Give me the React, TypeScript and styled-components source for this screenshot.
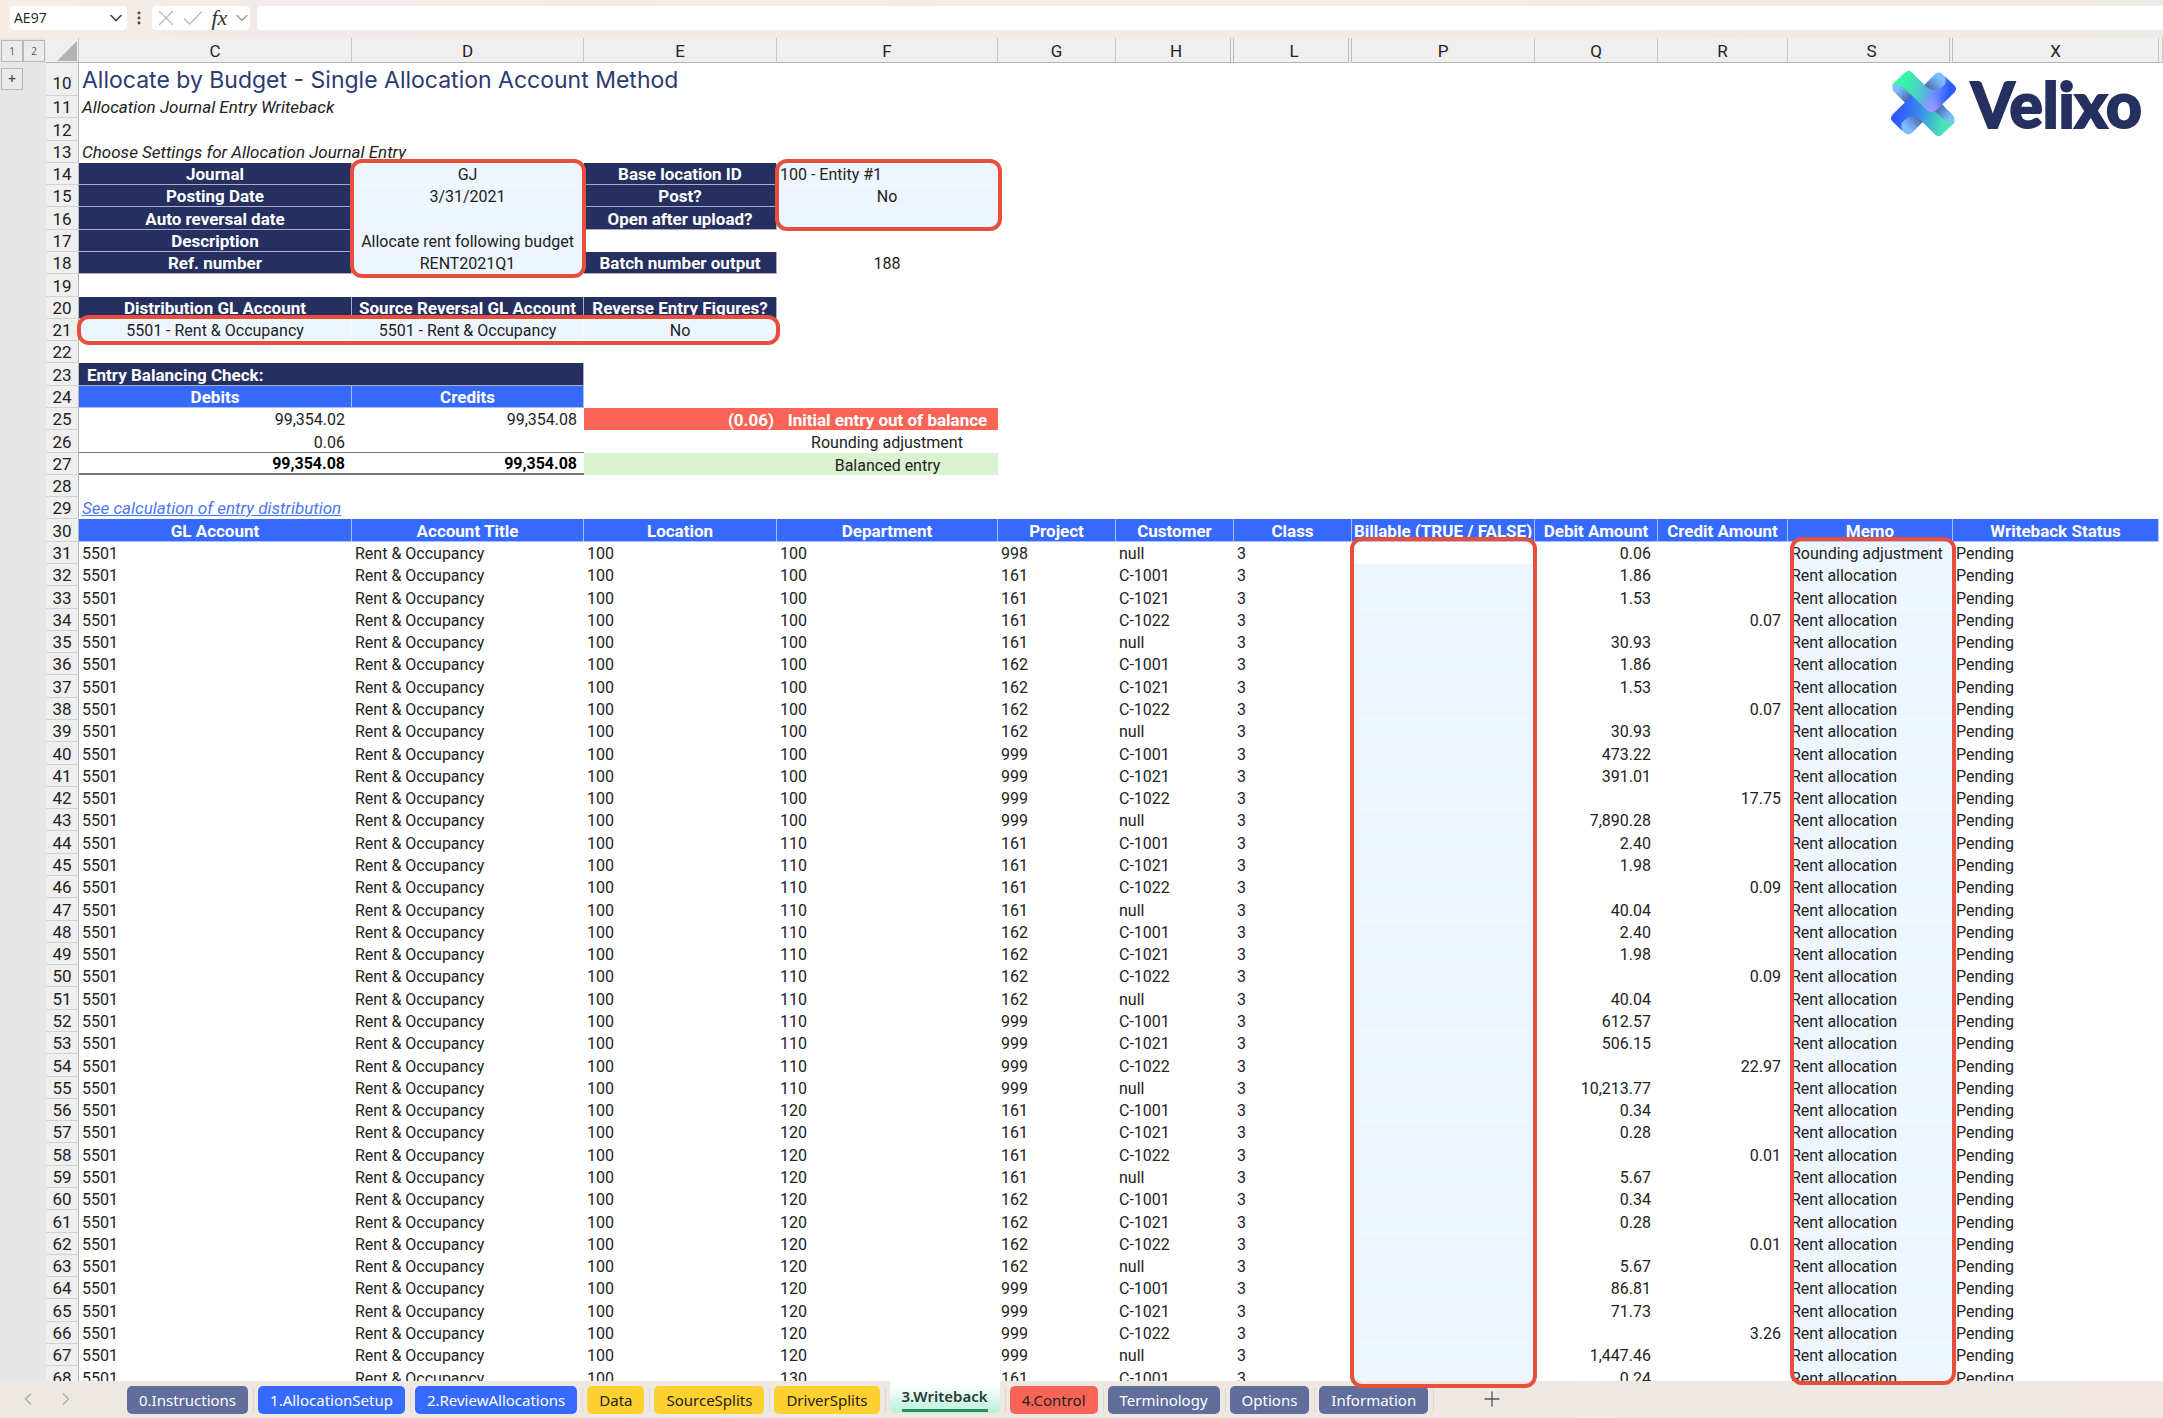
import React from "react";
import styled, { createGlobalStyle, css } from "styled-components";

const NAVY = "#253061";
const BLUE = "#366aff";
const INPUT = "#edf5fe";
const RED = "#f96456";
const GREEN = "#dbf2d0";
const RING = "#e74f3c";

const GlobalStyle = createGlobalStyle`
  * { box-sizing: border-box; }
  body { margin: 0; background: #fff; }
  button, input { font: inherit; color: inherit; }
`;

const Workbook = styled.div`
  height: 100vh;
  display: flex;
  flex-direction: column;
  overflow: hidden;
  color: #222;
  font-family: Roboto, "Liberation Sans", sans-serif;
  font-size: 16px;
`;

/* ---------- formula bar ---------- */

const FormulaBar = styled.header`
  flex: none;
  height: 38px;
  display: flex;
  align-items: center;
  padding: 0 0 3px 10px;
  background: linear-gradient(90deg, #f6ede3, #f1eae6 12%, #f3ebe3 50%, #f3e9e2 90%, #eee9e4);
  font-family: "Open Sans", "Noto Sans", sans-serif;
  font-size: 14px;
`;

const NameBox = styled.label`
  width: 117px;
  height: 24px;
  display: flex;
  align-items: center;
  justify-content: space-between;
  padding: 0 5px 0 4px;
  background: #fff;
  border-radius: 4px;
`;

const NameInput = styled.input`
  width: 80px;
  padding: 0;
  border: 0;
  outline: 0;
  background: none;
`;

const Dots = styled.svg`
  width: 4px;
  height: 14px;
  margin: 0 11px 0 10px;
`;

const FormulaTools = styled.div`
  width: 98px;
  height: 24px;
  margin-right: 7px;
  padding: 0 2px 0 6px;
  display: flex;
  align-items: center;
  justify-content: space-between;
  background: #fff;
  border-radius: 4px;
`;

const ToolButton = styled.button`
  display: flex;
  padding: 0;
  border: 0;
  background: none;
`;

const FxLabel = styled.span`
  font: italic 22px/22px "Liberation Serif", serif;
  color: #333;
`;

const FormulaInput = styled.input`
  flex: 1;
  min-width: 0;
  height: 24px;
  padding: 0 8px;
  border: 0;
  outline: 0;
  border-radius: 4px 0 0 4px;
  background: #fff;
`;

/* ---------- sheet ---------- */

const Sheet = styled.main`
  position: relative;
  flex: 1;
  min-height: 0;
`;

const Viewport = styled.div`
  height: 100%;
  display: flex;
  overflow: hidden;
`;

const Gutter = styled.aside`
  flex: none;
  width: 46px;
  padding: 2px 1px;
  display: flex;
  flex-direction: column;
  gap: 6px;
  background: #e6e6e6;
`;

const Levels = styled.div`
  display: flex;
`;

const OutlineButton = styled.button<{ $sign?: boolean }>`
  width: 22px;
  height: 22px;
  padding: 0;
  border: 1px solid #b3b8bf;
  background: #ebebeb;
  font: 10px/20px "Open Sans", sans-serif;
  color: #555;
  ${(p) => p.$sign && css`font-size: 14px; font-weight: 600; color: #444;`}
`;

const Grid = styled.table`
  flex: 1;
  width: 0;
  align-self: flex-start;
  table-layout: fixed;
  border-collapse: separate;
  border-spacing: 0;
  line-height: 19px;
  white-space: nowrap;
`;

const Column = styled.col<{ $w?: number }>`
  ${(p) => p.$w && css`width: ${p.$w}px;`}
`;

const HeadRow = styled.tr`
  height: 25px;
`;

const ColumnHead = styled.th<{ $folded?: boolean }>`
  padding: 2px 0 0 ${(p) => (p.$folded ? 6 : 0)}px;
  background: #efefef;
  border-right: ${(p) => (p.$folded ? "4px double #bdbdbd" : "1px solid #c6c6c6")};
  border-bottom: 1px solid #b4b4b4;
  font-size: 17px;
  font-weight: 400;
`;

const Corner = styled(ColumnHead)`
  svg { display: block; margin: 0 1px 0 auto; }
`;

const Row = styled.tr`
  height: 22px;
  &:nth-child(7n + 3), &:nth-child(7n) { height: 23px; }
  &:first-child { height: 33px; }
`;

const RowHead = styled.th`
  padding: 2px 0 0;
  background: #efefef;
  border-right: 1px solid #b4b4b4;
  border-bottom: 1px solid #d2d2d2;
  font-size: 17px;
  font-weight: 400;
  ${Row}:first-child & { padding-top: 8px; }
`;

type Tone = "navy" | "blue" | "input" | "red" | "green" | "none";
type Align = "left" | "center" | "right";

const fills: Record<Tone, ReturnType<typeof css>> = {
  navy: css`background: ${NAVY}; color: #fff; font-size: 17px; font-weight: 700; border-color: #a9aec4;`,
  blue: css`background: ${BLUE}; color: #fff; font-size: 17px; font-weight: 700; border-color: #a8c0ff;`,
  input: css`background: ${INPUT}; border-color: #f5f9fe;`,
  red: css`background: ${RED}; color: #fff; font-size: 17px; font-weight: 700;`,
  green: css`background: ${GREEN};`,
  none: css``,
};

const Cell = styled.td<{ $tone?: Tone; $align?: Align; $total?: "above" | "below" }>`
  padding: 2px ${(p) => (p.$align === "right" ? 6 : 0)}px 0 ${(p) => (!p.$align || p.$align === "left" ? 3 : 0)}px;
  border: 0 solid transparent;
  border-width: 0 1px 1px 0;
  text-align: ${(p) => p.$align ?? "left"};
  ${(p) => fills[p.$tone ?? "none"]}
  ${(p) => (p.$tone === "red" || p.$tone === "green") && css`border-width: 0;`}
  ${(p) => p.$align === "right" && p.$tone === "red" && css`padding-right: 3px;`}
  ${(p) => p.$total === "above" && css`padding-right: 7px; border-width: 0 0 1px; border-bottom-color: #777;`}
  ${(p) => p.$total === "below" && css`padding: 1px 7px 0 0; border-width: 0 0 2px; border-bottom-color: #777; font-weight: 700; color: #000;`}
`;

const Title = styled.h1`
  margin: 0;
  font-family: Inter, Roboto, sans-serif;
  font-size: 23px;
  line-height: 24px;
  font-weight: 400;
  color: #2d3a70;
`;

const Note = styled.i`
  font-size: 17px;
`;

const Indented = styled.span`
  padding-left: 5px;
`;

const SheetLink = styled.a`
  color: #4a78f5;
  font-size: 17px;
  font-style: italic;
`;

/* Red callouts float over the cells they mark. */
const Ring = styled.div<{ $x: number; $y: number; $w: number; $h?: number; $over?: number }>`
  position: absolute;
  z-index: 2;
  left: ${(p) => p.$x}px;
  top: ${(p) => p.$y}px;
  width: ${(p) => p.$w}px;
  ${(p) => (p.$h ? css`height: ${p.$h}px;` : css`bottom: -${p.$over}px;`)}
  border: 4px solid ${RING};
  border-radius: 12px;
  pointer-events: none;
`;

const Brand = styled.div`
  position: absolute;
  top: 32px;
  left: 1890px;
  display: flex;
  align-items: center;
  gap: 14px;
  color: ${NAVY};
  font: 900 62px/66px Lato, sans-serif;
  -webkit-text-stroke: 2px ${NAVY};
`;

/* ---------- tabs ---------- */

const TabBar = styled.nav`
  flex: none;
  height: 37px;
  display: flex;
  align-items: flex-start;
  padding-left: 20px;
  background: linear-gradient(90deg, #ede8e1, #eee8e3 60%, #f0e7e2);
  font-family: "Noto Sans", "Open Sans", sans-serif;
  font-size: 15px;
`;

const Arrows = styled.div`
  width: 107px;
  height: 36px;
  display: flex;
  align-items: center;
  gap: 22px;
`;

const TabSlot = styled.div`
  display: flex;
  align-items: center;
  &::after {
    content: "";
    width: 1px;
    height: 24px;
    margin: 5px 4px 0 5px;
    background: #dcd7d0;
  }
`;

type TabTone = "slate" | "blue" | "yellow" | "red" | "active";

const tabFills: Record<TabTone, ReturnType<typeof css>> = {
  slate: css`background: #616d9b; color: #fff;`,
  blue: css`background: ${BLUE}; color: #fff;`,
  yellow: css`background: #ffd130; color: #222;`,
  red: css`background: ${RED}; color: #222;`,
  active: css`
    height: 32px;
    margin-top: 0;
    background: linear-gradient(#fff 10%, #b8f0dc);
    font-weight: 600;
    color: #263b33;
    border-radius: 0 0 5px 5px;
  `,
};

const Tab = styled.button<{ $tone: TabTone }>`
  height: 28px;
  margin-top: 5px;
  padding: 0 12px;
  border: 0;
  border-radius: 5px;
  line-height: 26px;
  white-space: nowrap;
  ${(p) => tabFills[p.$tone]}
`;

const ActiveText = styled.span`
  display: block;
  border-bottom: 3px solid #2b8f5e;
`;

const AddTab = styled(ToolButton)`
  margin: 10px 0 0 46px;
`;

/* ---------- content ---------- */

const columns: { name: string; w: number; folded?: boolean }[] = [
  { name: "C", w: 273 },
  { name: "D", w: 232 },
  { name: "E", w: 193 },
  { name: "F", w: 221 },
  { name: "G", w: 118 },
  { name: "H", w: 118, folded: true },
  { name: "L", w: 118, folded: true },
  { name: "P", w: 183 },
  { name: "Q", w: 123 },
  { name: "R", w: 130 },
  { name: "S", w: 165, folded: true },
  { name: "X", w: 206 },
];

const tableHeads = [
  "GL Account", "Account Title", "Location", "Department", "Project", "Customer", "Class",
  "Billable (TRUE / FALSE)", "Debit Amount", "Credit Amount", "Memo", "Writeback Status",
];

const amounts = [
  "1.86", "1.53", "0.07", "30.93", "1.86", "1.53", "0.07", "30.93", "473.22", "391.01", "17.75", "7,890.28",
  "2.40", "1.98", "0.09", "40.04", "2.40", "1.98", "0.09", "40.04", "612.57", "506.15", "22.97", "10,213.77",
  "0.34", "0.28", "0.01", "5.67", "0.34", "0.28", "0.01", "5.67", "86.81", "71.73", "3.26", "1,447.46",
  "0.24",
];

const departments = ["100", "110", "120", "130"];
const projects = ["161", "162", "999"];
const customers = ["C-1001", "C-1021", "C-1022", "null"];

const entries = [
  { dept: "100", project: "998", customer: "null", debit: "0.06", credit: "", memo: "Rounding adjustment" },
  ...amounts.map((amount, i) => {
    const customer = customers[i % 4];
    const isCredit = customer === "C-1022";
    return {
      dept: departments[Math.floor(i / 12)],
      project: projects[Math.floor(i / 4) % 3],
      customer,
      debit: isCredit ? "" : amount,
      credit: isCredit ? amount : "",
      memo: "Rent allocation",
    };
  }),
];

const tabs: { label: string; tone: TabTone }[] = [
  { label: "0.Instructions", tone: "slate" },
  { label: "1.AllocationSetup", tone: "blue" },
  { label: "2.ReviewAllocations", tone: "blue" },
  { label: "Data", tone: "yellow" },
  { label: "SourceSplits", tone: "yellow" },
  { label: "DriverSplits", tone: "yellow" },
  { label: "3.Writeback", tone: "active" },
  { label: "4.Control", tone: "red" },
  { label: "Terminology", tone: "slate" },
  { label: "Options", tone: "slate" },
  { label: "Information", tone: "slate" },
];

const Line = ({ d, w, h, color, width = 1.3 }: { d: string; w: number; h: number; color: string; width?: number }) => (
  <svg width={w} height={h} viewBox={`0 0 ${w} ${h}`} fill="none" stroke={color} strokeWidth={width} strokeLinecap="round" aria-hidden="true">
    <path d={d} />
  </svg>
);

const SettingRow = ({ n, label, value, label2, value2, align2 = "center", tone2 = "input" }: {
  n: number; label: string; value: string; label2?: string; value2?: string; align2?: Align; tone2?: Tone;
}) => (
  <Row>
    <RowHead scope="row">{n}</RowHead>
    <Cell $tone="navy" $align="center">{label}</Cell>
    <Cell $tone="input" $align="center">{value}</Cell>
    {label2 && <Cell $tone="navy" $align="center">{label2}</Cell>}
    {label2 && <Cell $tone={tone2} $align={align2}>{value2}</Cell>}
  </Row>
);

const BlankRow = ({ n }: { n: number }) => (
  <Row><RowHead scope="row">{n}</RowHead></Row>
);

const RIBBON = "M58 26Q70 12 82 24L124 66Q143 82 162 73Q190 58 178 34L207 61Q218 72 206 84L155 134Q140 148 125 134L56 68Q40 52 20 64Q22 60 26 56Z";

const BrandMark = () => (
  <svg width="67" height="67" viewBox="16 16 199 199" aria-hidden="true">
    <defs>
      <linearGradient id="band" x1="0" x2="1">
        <stop offset="0.08" stopColor="#7dbcff" />
        <stop offset="0.32" stopColor="#4668a8" />
        <stop offset="0.68" stopColor="#4668a8" />
        <stop offset="0.92" stopColor="#7dbcff" />
      </linearGradient>
      <linearGradient id="over" gradientUnits="userSpaceOnUse" x1="50" y1="40" x2="210" y2="70">
        <stop offset="0.05" stopColor="#36f8a0" />
        <stop offset="0.4" stopColor="#4cc8d0" />
        <stop offset="0.65" stopColor="#6f8cff" />
        <stop offset="0.9" stopColor="#2a5cff" />
      </linearGradient>
      <radialGradient id="glow" gradientUnits="userSpaceOnUse" cx="138" cy="138" r="50">
        <stop offset="0" stopColor="#a39aff" />
        <stop offset="1" stopColor="#a39aff" stopOpacity="0" />
      </radialGradient>
      <linearGradient id="under" gradientUnits="userSpaceOnUse" x1="206" y1="71" x2="31" y2="41">
        <stop offset="0.05" stopColor="#3058ff" />
        <stop offset="0.4" stopColor="#3a86ee" />
        <stop offset="0.85" stopColor="#48e6b4" />
      </linearGradient>
    </defs>
    <rect x="14" y="78" width="203" height="75" rx="15" transform="rotate(45 115.5 115.5)" fill="url(#band)" />
    <rect x="14" y="78" width="203" height="75" rx="15" transform="rotate(-45 115.5 115.5)" fill="url(#band)" />
    <path d={RIBBON} transform="rotate(180 115.5 115.5)" fill="url(#under)" />
    <path d={RIBBON} fill="url(#over)" />
    <path d={RIBBON} fill="url(#glow)" />
  </svg>
);

export default function App() {
  return (
    <Workbook>
      <GlobalStyle />
      <FormulaBar>
        <NameBox>
          <NameInput aria-label="Name box" defaultValue="AE97" />
          <Line w={12} h={8} d="M1 1.5L6 6.5L11 1.5" color="#444" width={1.6} />
        </NameBox>
        <Dots viewBox="0 0 4 14" fill="#444"><circle cx="2" cy="2" r="1.4" /><circle cx="2" cy="7" r="1.4" /><circle cx="2" cy="12" r="1.4" /></Dots>
        <FormulaTools>
          <ToolButton aria-label="Cancel"><Line w={16} h={16} d="M1.5 1.5L14.5 14.5M14.5 1.5L1.5 14.5" color="#bbb" /></ToolButton>
          <ToolButton aria-label="Enter"><Line w={20} h={16} d="M1.5 9L6.5 14L18.5 2" color="#bbb" /></ToolButton>
          <ToolButton aria-label="Insert function"><FxLabel>fx</FxLabel></ToolButton>
          <ToolButton aria-label="Formula options"><Line w={12} h={8} d="M1 1.5L6 6.5L11 1.5" color="#999" /></ToolButton>
        </FormulaTools>
        <FormulaInput aria-label="Formula" />
      </FormulaBar>

      <Sheet>
        <Viewport>
          <Gutter>
            <Levels>
              <OutlineButton>1</OutlineButton>
              <OutlineButton>2</OutlineButton>
            </Levels>
            <OutlineButton $sign>+</OutlineButton>
          </Gutter>
          <Grid>
            <colgroup>
              <Column $w={33} />
              {columns.map((c) => <Column key={c.name} $w={c.w} />)}
              <Column />
            </colgroup>
            <thead>
              <HeadRow>
                <Corner as="td">
                  <svg width="20" height="20" viewBox="0 0 20 20"><path d="M20 0V20H0Z" fill="#b3b3b3" /></svg>
                </Corner>
                {columns.map((c) => <ColumnHead key={c.name} scope="col" $folded={c.folded}>{c.name}</ColumnHead>)}
                <ColumnHead as="td" />
              </HeadRow>
            </thead>
            <tbody>
              <Row>
                <RowHead scope="row">10</RowHead>
                <Cell colSpan={7}><Title>Allocate by Budget - Single Allocation Account Method</Title></Cell>
              </Row>
              <Row>
                <RowHead scope="row">11</RowHead>
                <Cell colSpan={7}><Note>Allocation Journal Entry Writeback</Note></Cell>
              </Row>
              <BlankRow n={12} />
              <Row>
                <RowHead scope="row">13</RowHead>
                <Cell colSpan={7}><Note>Choose Settings for Allocation Journal Entry</Note></Cell>
              </Row>
              <SettingRow n={14} label="Journal" value="GJ" label2="Base location ID" value2="100 - Entity #1" align2="left" />
              <SettingRow n={15} label="Posting Date" value="3/31/2021" label2="Post?" value2="No" />
              <SettingRow n={16} label="Auto reversal date" value="" label2="Open after upload?" value2="" />
              <SettingRow n={17} label="Description" value="Allocate rent following budget" />
              <SettingRow n={18} label="Ref. number" value="RENT2021Q1" label2="Batch number output" value2="188" tone2="none" />
              <BlankRow n={19} />
              <Row>
                <RowHead scope="row">20</RowHead>
                <Cell $tone="navy" $align="center">Distribution GL Account</Cell>
                <Cell $tone="navy" $align="center">Source Reversal GL Account</Cell>
                <Cell $tone="navy" $align="center">Reverse Entry Figures?</Cell>
              </Row>
              <Row>
                <RowHead scope="row">21</RowHead>
                <Cell $tone="input" $align="center">5501 - Rent &amp; Occupancy</Cell>
                <Cell $tone="input" $align="center">5501 - Rent &amp; Occupancy</Cell>
                <Cell $tone="input" $align="center">No</Cell>
              </Row>
              <BlankRow n={22} />
              <Row>
                <RowHead scope="row">23</RowHead>
                <Cell $tone="navy" colSpan={2}><Indented>Entry Balancing Check:</Indented></Cell>
              </Row>
              <Row>
                <RowHead scope="row">24</RowHead>
                <Cell $tone="blue" $align="center">Debits</Cell>
                <Cell $tone="blue" $align="center">Credits</Cell>
              </Row>
              <Row>
                <RowHead scope="row">25</RowHead>
                <Cell $align="right">99,354.02</Cell>
                <Cell $align="right">99,354.08</Cell>
                <Cell $tone="red" $align="right">(0.06)</Cell>
                <Cell $tone="red" $align="center">Initial entry out of balance</Cell>
              </Row>
              <Row>
                <RowHead scope="row">26</RowHead>
                <Cell $align="right" $total="above">0.06</Cell>
                <Cell $align="right" $total="above" />
                <Cell />
                <Cell $align="center">Rounding adjustment</Cell>
              </Row>
              <Row>
                <RowHead scope="row">27</RowHead>
                <Cell $align="right" $total="below">99,354.08</Cell>
                <Cell $align="right" $total="below">99,354.08</Cell>
                <Cell $tone="green" />
                <Cell $tone="green" $align="center">Balanced entry</Cell>
              </Row>
              <BlankRow n={28} />
              <Row>
                <RowHead scope="row">29</RowHead>
                <Cell colSpan={3}><SheetLink href="#distribution">See calculation of entry distribution</SheetLink></Cell>
              </Row>
              <Row>
                <RowHead scope="row">30</RowHead>
                {tableHeads.map((h) => <Cell key={h} $tone="blue" $align="center">{h}</Cell>)}
              </Row>
              {entries.map((e, i) => (
                <Row key={i}>
                  <RowHead scope="row">{31 + i}</RowHead>
                  <Cell>5501</Cell>
                  <Cell>Rent &amp; Occupancy</Cell>
                  <Cell>100</Cell>
                  <Cell>{e.dept}</Cell>
                  <Cell>{e.project}</Cell>
                  <Cell>{e.customer}</Cell>
                  <Cell>3</Cell>
                  <Cell $tone={i === 0 ? "none" : "input"} />
                  <Cell $align="right">{e.debit}</Cell>
                  <Cell $align="right">{e.credit}</Cell>
                  <Cell $tone="input">{e.memo}</Cell>
                  <Cell>Pending</Cell>
                </Row>
              ))}
            </tbody>
          </Grid>
        </Viewport>
        <Brand><BrandMark />Velixo</Brand>
        <Ring $x={350} $y={121} $w={236} $h={119} />
        <Ring $x={775} $y={121} $w={227} $h={72} />
        <Ring $x={77} $y={277} $w={703} $h={30} />
        <Ring $x={1350} $y={499} $w={187} $over={7} />
        <Ring $x={1790} $y={499} $w={166} $over={4} />
      </Sheet>

      <TabBar aria-label="Sheets">
        <Arrows>
          <ToolButton aria-label="Previous sheet"><Line w={16} h={12} d="M10.5 1L5.5 6L10.5 11" color="#aaa" /></ToolButton>
          <ToolButton aria-label="Next sheet"><Line w={16} h={12} d="M5.5 1L10.5 6L5.5 11" color="#aaa" /></ToolButton>
        </Arrows>
        {tabs.map((t) => (
          <TabSlot key={t.label}>
            <Tab $tone={t.tone}>{t.tone === "active" ? <ActiveText>{t.label}</ActiveText> : t.label}</Tab>
          </TabSlot>
        ))}
        <AddTab aria-label="New sheet"><Line w={16} h={16} d="M8 1V15M1 8H15" color="#555" /></AddTab>
      </TabBar>
    </Workbook>
  );
}
